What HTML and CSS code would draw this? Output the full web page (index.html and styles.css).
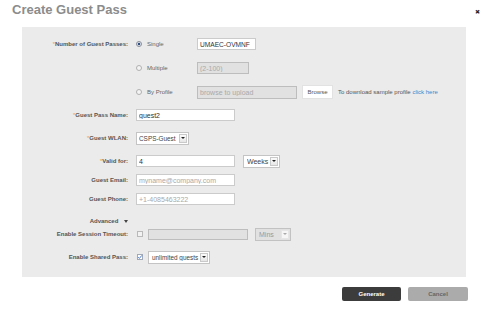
FILE: index.html
```html
<!DOCTYPE html>
<html lang="en">
<head>
  <meta charset="UTF-8" />
  <meta name="viewport" content="width=device-width, initial-scale=1.0"/>
  <title>Create Guest Pass</title>
  <link rel="stylesheet" href="styles.css">
</head>
<body>

<header class="dialog-head">
  <h1>Create Guest Pass</h1>
  <span class="close">&#10006;</span>
</header>

<main class="panel">

  <div class="passes">
    <div class="row">
      <label class="lbl"><span class="req">*</span>Number of Guest Passes:</label>
      <div class="field">
        <span class="radio-opt"><i class="radio checked"></i>Single</span>
        <input class="text-input w-single" type="text" value="UMAEC-OVMNF">
      </div>
    </div>
    <div class="row">
      <span class="lbl"></span>
      <div class="field">
        <span class="radio-opt"><i class="radio"></i>Multiple</span>
        <input class="text-input w-multi" type="text" placeholder="(2-100)" disabled>
      </div>
    </div>
    <div class="row">
      <span class="lbl"></span>
      <div class="field">
        <span class="radio-opt"><i class="radio"></i>By Profile</span>
        <input class="text-input w-profile tall" type="text" placeholder="browse to upload" disabled>
        <button class="browse">Browse</button>
        <span class="hint">To download sample profile <a href="#">click here</a></span>
      </div>
    </div>
  </div>

  <div class="row">
    <label class="lbl"><span class="req">*</span>Guest Pass Name:</label>
    <div class="field">
      <input class="text-input w-wide" type="text" value="guest2">
    </div>
  </div>

  <div class="row">
    <label class="lbl"><span class="req">*</span>Guest WLAN:</label>
    <div class="field">
      <div class="select w-wlan"><span>CSPS-Guest</span><i class="arrow"></i></div>
    </div>
  </div>

  <div class="row">
    <label class="lbl"><span class="req">*</span>Valid for:</label>
    <div class="field">
      <input class="text-input w-wide" type="text" value="4">
      <div class="select w-unit"><span>Weeks</span><i class="arrow"></i></div>
    </div>
  </div>

  <div class="row gap-tight">
    <label class="lbl">Guest Email:</label>
    <div class="field">
      <input class="text-input w-wide" type="text" placeholder="myname@company.com">
    </div>
  </div>

  <div class="row gap-tight">
    <label class="lbl">Guest Phone:</label>
    <div class="field">
      <input class="text-input w-wide" type="text" placeholder="+1-4085463222">
    </div>
  </div>

  <div class="row row-short">
    <span class="lbl">Advanced <i class="caret"></i></span>
  </div>

  <div class="row gap-none">
    <label class="lbl">Enable Session Timeout:</label>
    <div class="field">
      <i class="check"></i>
      <input class="text-input w-timeout" type="text" disabled>
      <div class="select w-mins disabled"><span>Mins</span><i class="arrow"></i></div>
    </div>
  </div>

  <div class="row">
    <label class="lbl">Enable Shared Pass:</label>
    <div class="field">
      <i class="check checked">
        <svg viewBox="0 0 6 6" width="6" height="6"><path d="M1.2 3.2 L2.4 4.4 L4.8 1.4" fill="none" stroke="#3d6fc4" stroke-width="0.9"/></svg>
      </i>
      <div class="select w-guests"><span>unlimited guests</span><i class="arrow"></i></div>
    </div>
  </div>

</main>

<footer class="actions">
  <button class="btn btn-primary">Generate</button>
  <button class="btn btn-secondary">Cancel</button>
</footer>

</body>
</html>
```

FILE: styles.css
```css
* {
  margin: 0;
  padding: 0;
  box-sizing: border-box;
}

body {
  font-family: "Liberation Sans", Arial, sans-serif;
  background: #fff;
  color: #555;
  width: 490px;
  height: 312px;
  overflow: hidden;
}

.dialog-head {
  display: flex;
  justify-content: space-between;
  align-items: flex-start;
  height: 27px;
  padding: 3px 10px 0 12px;
}

.dialog-head h1 {
  font-size: 13px;
  line-height: 13px;
  font-weight: bold;
  color: #8c8c8c;
}

.close {
  font-size: 6px;
  color: #2a2a2a;
  margin-top: 5px;
}

.panel {
  margin-left: 22px;
  width: 444px;
  background: #ebebeb;
  padding: 10px 0 13px;
}

.row {
  display: flex;
  align-items: center;
  height: 14px;
  margin-top: 9px;
}

.passes .row {
  margin-top: 10px;
}

.passes .row:first-child {
  margin-top: 0;
}

.row.gap-tight {
  margin-top: 5px;
}

.row.row-short {
  height: 10px;
  margin-top: 10px;
}

.row.gap-none {
  margin-top: 1px;
}

.lbl {
  flex-shrink: 0;
  width: 106px;
  text-align: right;
  font-size: 6px;
  font-weight: bold;
  color: #555;
}

.req {
  color: #f0a030;
  font-weight: normal;
}

.field {
  display: flex;
  align-items: center;
  margin-left: 8px;
}

.radio-opt {
  display: flex;
  align-items: center;
  width: 61px;
  font-size: 6px;
  color: #666;
}

.radio {
  width: 6px;
  height: 6px;
  margin-right: 5px;
  border: 1px solid #b0b0b0;
  border-radius: 50%;
  background: #f4f4f4;
}

.radio.checked {
  border-color: #8a8f99;
  background: radial-gradient(circle, #2f4f7f 0 1.3px, #dfe4ec 1.6px);
}

.text-input {
  height: 12px;
  border: 1px solid #cbcbcb;
  background: #fff;
  padding: 0 2px;
  font: 7px "Liberation Sans", Arial, sans-serif;
  color: #333;
  outline: none;
}

.text-input::placeholder {
  color: #a9a9a9;
}

.text-input:disabled {
  background: #e1e1e1;
  border-color: #bdbdbd;
}

.text-input.tall {
  height: 13px;
}

.w-single { width: 59px; font-size: 6.6px; }
.w-multi { width: 52px; }
.w-profile { width: 100px; }
.w-wide { width: 99px; }
.w-timeout { width: 100px; margin-left: 5px; height: 11px; }

.browse {
  margin-left: 5px;
  width: 31px;
  height: 14px;
  border: 1px solid #e2e2e2;
  background: #fff;
  font: 6px "Liberation Sans", Arial, sans-serif;
  color: #555;
}

.hint {
  margin-left: 5px;
  font-size: 6px;
  color: #555;
}

.hint a {
  color: #3b87cf;
  text-decoration: none;
}

.select {
  display: flex;
  align-items: center;
  height: 13px;
  padding-left: 3px;
  border: 1px solid #c4c4c4;
  background: #fff;
  font-size: 7px;
  color: #444;
  white-space: nowrap;
}

.select span {
  flex: 1;
  overflow: hidden;
}

.select .arrow {
  display: flex;
  align-items: center;
  justify-content: center;
  align-self: stretch;
  flex-shrink: 0;
  width: 8px;
  margin: 1px;
  border: 1px solid #c9c9c9;
  background: linear-gradient(#fbfbfb, #e6e6e6);
}

.select .arrow::before {
  content: "";
  border-left: 2px solid transparent;
  border-right: 2px solid transparent;
  border-top: 2px solid #222;
}

.select.disabled {
  background: #e1e1e1;
  border-color: #c2c2c2;
  color: #999;
}

.select.disabled .arrow {
  background: #f6f6f6;
  border-color: #e6e6e6;
}

.select.disabled .arrow::before {
  border-top-color: #aaa;
}

.w-wlan { width: 53px; padding-left: 2px; font-size: 6.4px; }
.w-unit { width: 37px; margin-left: 8px; }
.w-mins { width: 36px; margin-left: 7px; }
.w-guests { width: 62px; margin-left: 5px; font-size: 6.4px; }

.check {
  display: block;
  width: 6px;
  height: 6px;
  margin-left: 1px;
  border: 1px solid #b9b9b9;
  background: #f2f2f2;
}

.check svg {
  display: block;
  margin: -1px;
}

.check.checked {
  background: #fff;
  border-color: #9fa9b8;
}

.caret {
  display: inline-block;
  margin-left: 4px;
  vertical-align: middle;
  border-left: 2.5px solid transparent;
  border-right: 2.5px solid transparent;
  border-top: 3px solid #444;
}

.actions {
  display: flex;
  justify-content: flex-end;
  gap: 7px;
  margin-top: 10px;
  padding-right: 22px;
}

.btn {
  width: 59px;
  height: 14px;
  border: none;
  border-radius: 2px;
  font: bold 6px "Liberation Sans", Arial, sans-serif;
}

.btn-primary {
  background: #3c3c3c;
  color: #fff;
}

.btn-secondary {
  width: 60px;
  background: #ababab;
  color: #666;
}
```
